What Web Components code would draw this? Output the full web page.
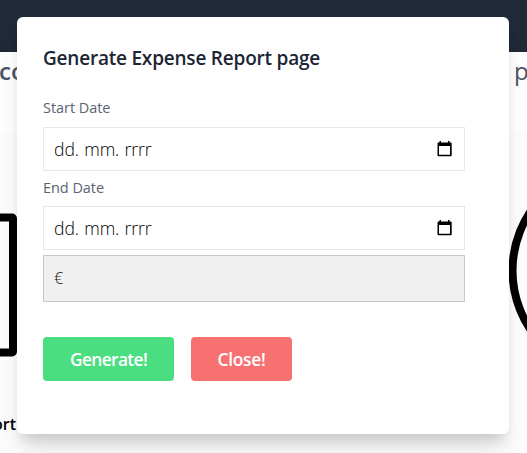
<!DOCTYPE html>
<html lang="en"><head><meta charset="utf-8"><title>Expense report</title>
<style>
html,body{margin:0;height:100%;overflow:hidden;font-family:"Open Sans","Noto Sans",sans-serif}
</style></head><body>
<report-page>
<report-dialog heading="Generate Expense Report page">
<date-field label="Start Date"></date-field>
<date-field label="End Date"></date-field>
<amount-box>€</amount-box>
<action-button slot="actions" style="--bg:#4ade80;--w:131px;--ls:-.65px">Generate!</action-button>
<action-button slot="actions" style="--bg:#f87171;--w:101px;--ls:-.3px">Close!</action-button>
</report-dialog>
</report-page>
<script>
function define(name, html, setup) {
  customElements.define(name, class extends HTMLElement {
    connectedCallback() {
      if (this.shadowRoot) return;
      const root = this.attachShadow({mode: 'open'});
      root.innerHTML = html;
      if (setup) setup(this, root);
    }
  });
}
define('report-page', `<style>
:host{display:block;position:relative;box-sizing:border-box;width:527px;height:453px;padding:17px 18px 19px 17px;overflow:hidden;background:linear-gradient(#1f2937 52px,#fefefe 52px,#fefefe 131px,#fcfcfc 132px)}
.bg{position:absolute;white-space:nowrap;line-height:30px}
.l{left:-1px;top:56px;font-size:24px;font-weight:600;color:#4b5563}
.r{left:514px;top:56px;font-size:24px;font-weight:500;color:#4b5563}
.b{right:511px;top:409px;font-size:16px;font-weight:600;color:#000}
svg{position:absolute;left:0;top:0}
::slotted(*){position:relative}
</style>
<svg width="527" height="453"><rect x="-120" y="217.500" width="133" height="135" rx="1" fill="none" stroke="#000" stroke-width="8"/><circle cx="618.5" cy="270.5" r="106" fill="none" stroke="#000" stroke-width="8"/></svg>
<span class="bg l">co</span><span class="bg r">p</span><span class="bg b">ort</span><slot></slot>`);
define('report-dialog', `<style>
:host{display:block;box-sizing:border-box;height:417px;padding:26px 44px 0 26px;background:#fff;border-radius:6px;box-shadow:0 20px 25px -5px rgba(0,0,0,.1),0 10px 12px -4px rgba(0,0,0,.12)}
h1{margin:0 0 22px;font-size:19px;line-height:31px;font-weight:600;letter-spacing:-.21px;color:#1c2533;white-space:nowrap}
.a{display:flex;gap:17px;margin-top:35px}
</style><h1></h1><slot></slot><div class="a"><slot name="actions"></slot></div>`,
(el, r) => r.querySelector('h1').textContent = el.getAttribute('heading'));
define('date-field', `<style>
:host{display:block}
label{display:block;height:31px;line-height:24px;font-size:14.5px;color:#5b6472;letter-spacing:-.05px}
:host(:nth-of-type(2)) label{height:35px;line-height:34px}
.i{display:flex;align-items:center;justify-content:space-between;box-sizing:border-box;height:44px;border:1px solid #e5e7eb;padding:0 12px 0 10px;font-size:17.6px;font-weight:350;color:#000;word-spacing:.8px;letter-spacing:-.08px}
svg{display:block;margin-top:-1px}
</style><label></label><div class="i"><span>dd. mm. rrrr</span><svg width="15" height="16" viewBox="0 0 15 16"><path d="M2.5 0h1.5v1.5h7V0h1.5v1.5h1.2q1 0 1 1v11.7q0 1-1 1H1.5q-1 0-1-1V2.500q0-1 1-1h1zM2 5v8.700h11V5z" fill-rule="evenodd"/></svg></div>`,
(el, r) => r.querySelector('label').textContent = el.getAttribute('label'));
define('amount-box', `<style>
:host{display:block;box-sizing:border-box;height:47px;margin-top:5px;border:1px solid #c8c8c8;background:#f0f0f0;padding-left:10px;line-height:44px;font-size:16px;font-weight:350;color:#111}
</style><slot></slot>`);
define('action-button', `<style>
:host{display:block;width:var(--w);height:44px;border-radius:4px;background:var(--bg);line-height:44px;text-align:center;font-size:17.4px;font-weight:600;color:#fff;letter-spacing:var(--ls)}
</style><slot></slot>`);
</script></body></html>
